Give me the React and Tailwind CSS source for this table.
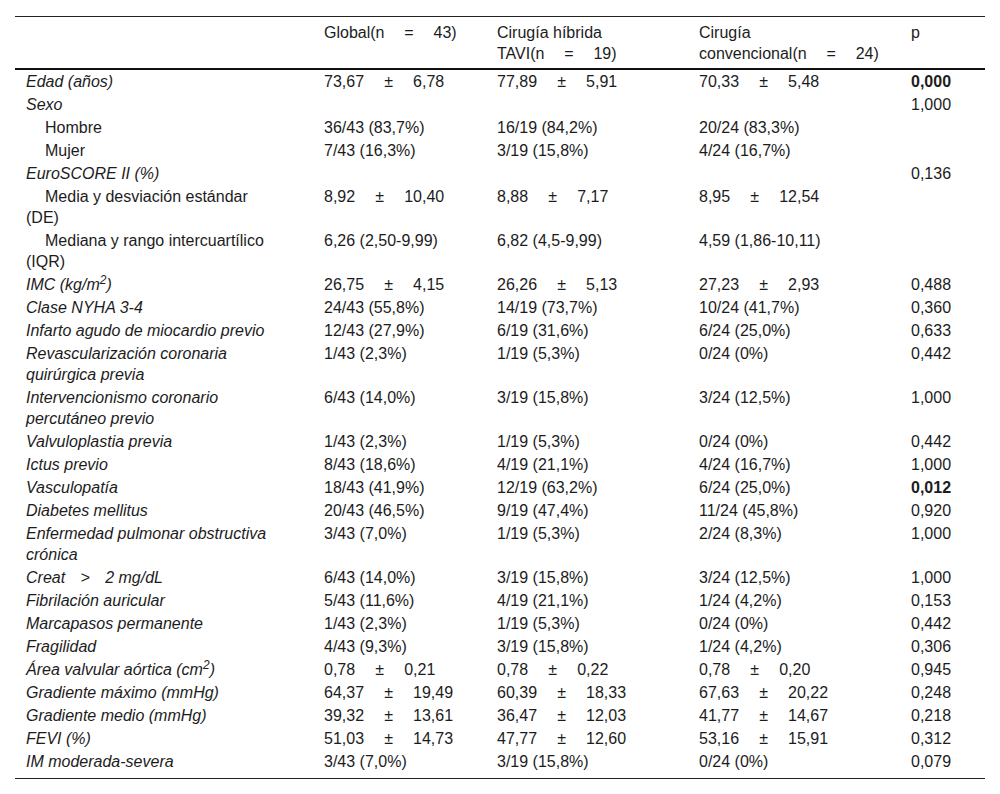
const rows = [
  { label: 'Edad (años)', it: true, v: [['73,67', '6,78'], ['77,89', '5,91'], ['70,33', '5,48']], p: '0,000', bold: true },
  { label: 'Sexo', it: true, v: [null, null, null], p: '1,000' },
  { label: 'Hombre', indent: true, v: ['36/43 (83,7%)', '16/19 (84,2%)', '20/24 (83,3%)'] },
  { label: 'Mujer', indent: true, v: ['7/43 (16,3%)', '3/19 (15,8%)', '4/24 (16,7%)'] },
  { label: 'EuroSCORE II (%)', it: true, v: [null, null, null], p: '0,136' },
  { label: ['Media y desviación estándar', '(DE)'], indent: true, v: [['8,92', '10,40'], ['8,88', '7,17'], ['8,95', '12,54']] },
  { label: ['Mediana y rango intercuartílico', '(IQR)'], indent: true, v: ['6,26 (2,50-9,99)', '6,82 (4,5-9,99)', '4,59 (1,86-10,11)'] },
  { label: 'imc', it: true, v: [['26,75', '4,15'], ['26,26', '5,13'], ['27,23', '2,93']], p: '0,488' },
  { label: 'Clase NYHA 3-4', it: true, v: ['24/43 (55,8%)', '14/19 (73,7%)', '10/24 (41,7%)'], p: '0,360' },
  { label: 'Infarto agudo de miocardio previo', it: true, v: ['12/43 (27,9%)', '6/19 (31,6%)', '6/24 (25,0%)'], p: '0,633' },
  { label: ['Revascularización coronaria', 'quirúrgica previa'], it: true, v: ['1/43 (2,3%)', '1/19 (5,3%)', '0/24 (0%)'], p: '0,442' },
  { label: ['Intervencionismo coronario', 'percutáneo previo'], it: true, v: ['6/43 (14,0%)', '3/19 (15,8%)', '3/24 (12,5%)'], p: '1,000' },
  { label: 'Valvuloplastia previa', it: true, v: ['1/43 (2,3%)', '1/19 (5,3%)', '0/24 (0%)'], p: '0,442' },
  { label: 'Ictus previo', it: true, v: ['8/43 (18,6%)', '4/19 (21,1%)', '4/24 (16,7%)'], p: '1,000' },
  { label: 'Vasculopatía', it: true, v: ['18/43 (41,9%)', '12/19 (63,2%)', '6/24 (25,0%)'], p: '0,012', bold: true },
  { label: 'Diabetes mellitus', it: true, v: ['20/43 (46,5%)', '9/19 (47,4%)', '11/24 (45,8%)'], p: '0,920' },
  { label: ['Enfermedad pulmonar obstructiva', 'crónica'], it: true, v: ['3/43 (7,0%)', '1/19 (5,3%)', '2/24 (8,3%)'], p: '1,000' },
  { label: 'creat', it: true, v: ['6/43 (14,0%)', '3/19 (15,8%)', '3/24 (12,5%)'], p: '1,000' },
  { label: 'Fibrilación auricular', it: true, v: ['5/43 (11,6%)', '4/19 (21,1%)', '1/24 (4,2%)'], p: '0,153' },
  { label: 'Marcapasos permanente', it: true, v: ['1/43 (2,3%)', '1/19 (5,3%)', '0/24 (0%)'], p: '0,442' },
  { label: 'Fragilidad', it: true, v: ['4/43 (9,3%)', '3/19 (15,8%)', '1/24 (4,2%)'], p: '0,306' },
  { label: 'area', it: true, v: [['0,78', '0,21'], ['0,78', '0,22'], ['0,78', '0,20']], p: '0,945' },
  { label: 'Gradiente máximo (mmHg)', it: true, v: [['64,37', '19,49'], ['60,39', '18,33'], ['67,63', '20,22']], p: '0,248' },
  { label: 'Gradiente medio (mmHg)', it: true, v: [['39,32', '13,61'], ['36,47', '12,03'], ['41,77', '14,67']], p: '0,218' },
  { label: 'FEVI (%)', it: true, v: [['51,03', '14,73'], ['47,77', '12,60'], ['53,16', '15,91']], p: '0,312' },
  { label: 'IM moderada-severa', it: true, v: ['3/43 (7,0%)', '3/19 (15,8%)', '0/24 (0%)'], p: '0,079' },
]

function Sep({ children }) {
  return <span className="inline-block w-[49px] text-center">{children}</span>
}

function Value({ v }) {
  if (!v) return null
  if (Array.isArray(v)) {
    return (
      <>
        {v[0]}
        <Sep>±</Sep>
        {v[1]}
      </>
    )
  }
  return v
}

function Label({ row }) {
  const { label } = row
  if (label === 'imc') {
    return <>IMC (kg/m<sup className="text-[12px]">2</sup>)</>
  }
  if (label === 'area') {
    return <>Área valvular aórtica (cm<sup className="text-[12px]">2</sup>)</>
  }
  if (label === 'creat') {
    return (
      <>
        Creat<span className="inline-block w-[40px] text-center">&gt;</span>2 mg/dL
      </>
    )
  }
  if (Array.isArray(label)) {
    return (
      <>
        {label[0]}
        <br />
        {label[1]}
      </>
    )
  }
  return label
}

export default function App() {
  const td = 'pl-[11px] py-px align-top'
  const th = 'font-normal text-left pl-[11px] pt-[5px] pb-[4px] align-top'
  return (
    <div className="bg-white w-[1000px] min-h-[794px] pt-4 px-[15px] text-[#1c1c1c] text-[16px] leading-[21px]" style={{ fontFamily: '"Liberation Sans", Arial, sans-serif' }}>
      <table className="w-[970px] table-fixed border-collapse">
        <colgroup>
          <col className="w-[298px]" />
          <col className="w-[173px]" />
          <col className="w-[202px]" />
          <col className="w-[212px]" />
          <col className="w-[85px]" />
        </colgroup>
        <thead>
          <tr className="border-t border-[#222] border-b-2 border-b-[#111]">
            <th className={th} />
            <th className={th}>
              Global(n<Sep>=</Sep>43)
            </th>
            <th className={th}>
              Cirugía híbrida
              <br />
              TAVI(n<Sep>=</Sep>19)
            </th>
            <th className={th}>
              Cirugía
              <br />
              convencional(n<Sep>=</Sep>24)
            </th>
            <th className={th}>p</th>
          </tr>
        </thead>
        <tbody className="border-b border-[#222]">
          {rows.map((row, i) => {
            const last = i === rows.length - 1
            return (
              <tr key={i}>
                <td className={`${td} ${last ? 'pb-[6px]' : ''} ${row.it ? 'italic' : ''}`}>
                  <div className={row.indent ? 'indent-[19px]' : ''}>
                    <Label row={row} />
                  </div>
                </td>
                {row.v.map((v, j) => (
                  <td key={j} className={`${td} ${last ? 'pb-[6px]' : ''}`}>
                    <Value v={v} />
                  </td>
                ))}
                <td className={`${td} ${last ? 'pb-[6px]' : ''} ${row.bold ? 'font-bold' : ''}`}>{row.p}</td>
              </tr>
            )
          })}
        </tbody>
      </table>
    </div>
  )
}
